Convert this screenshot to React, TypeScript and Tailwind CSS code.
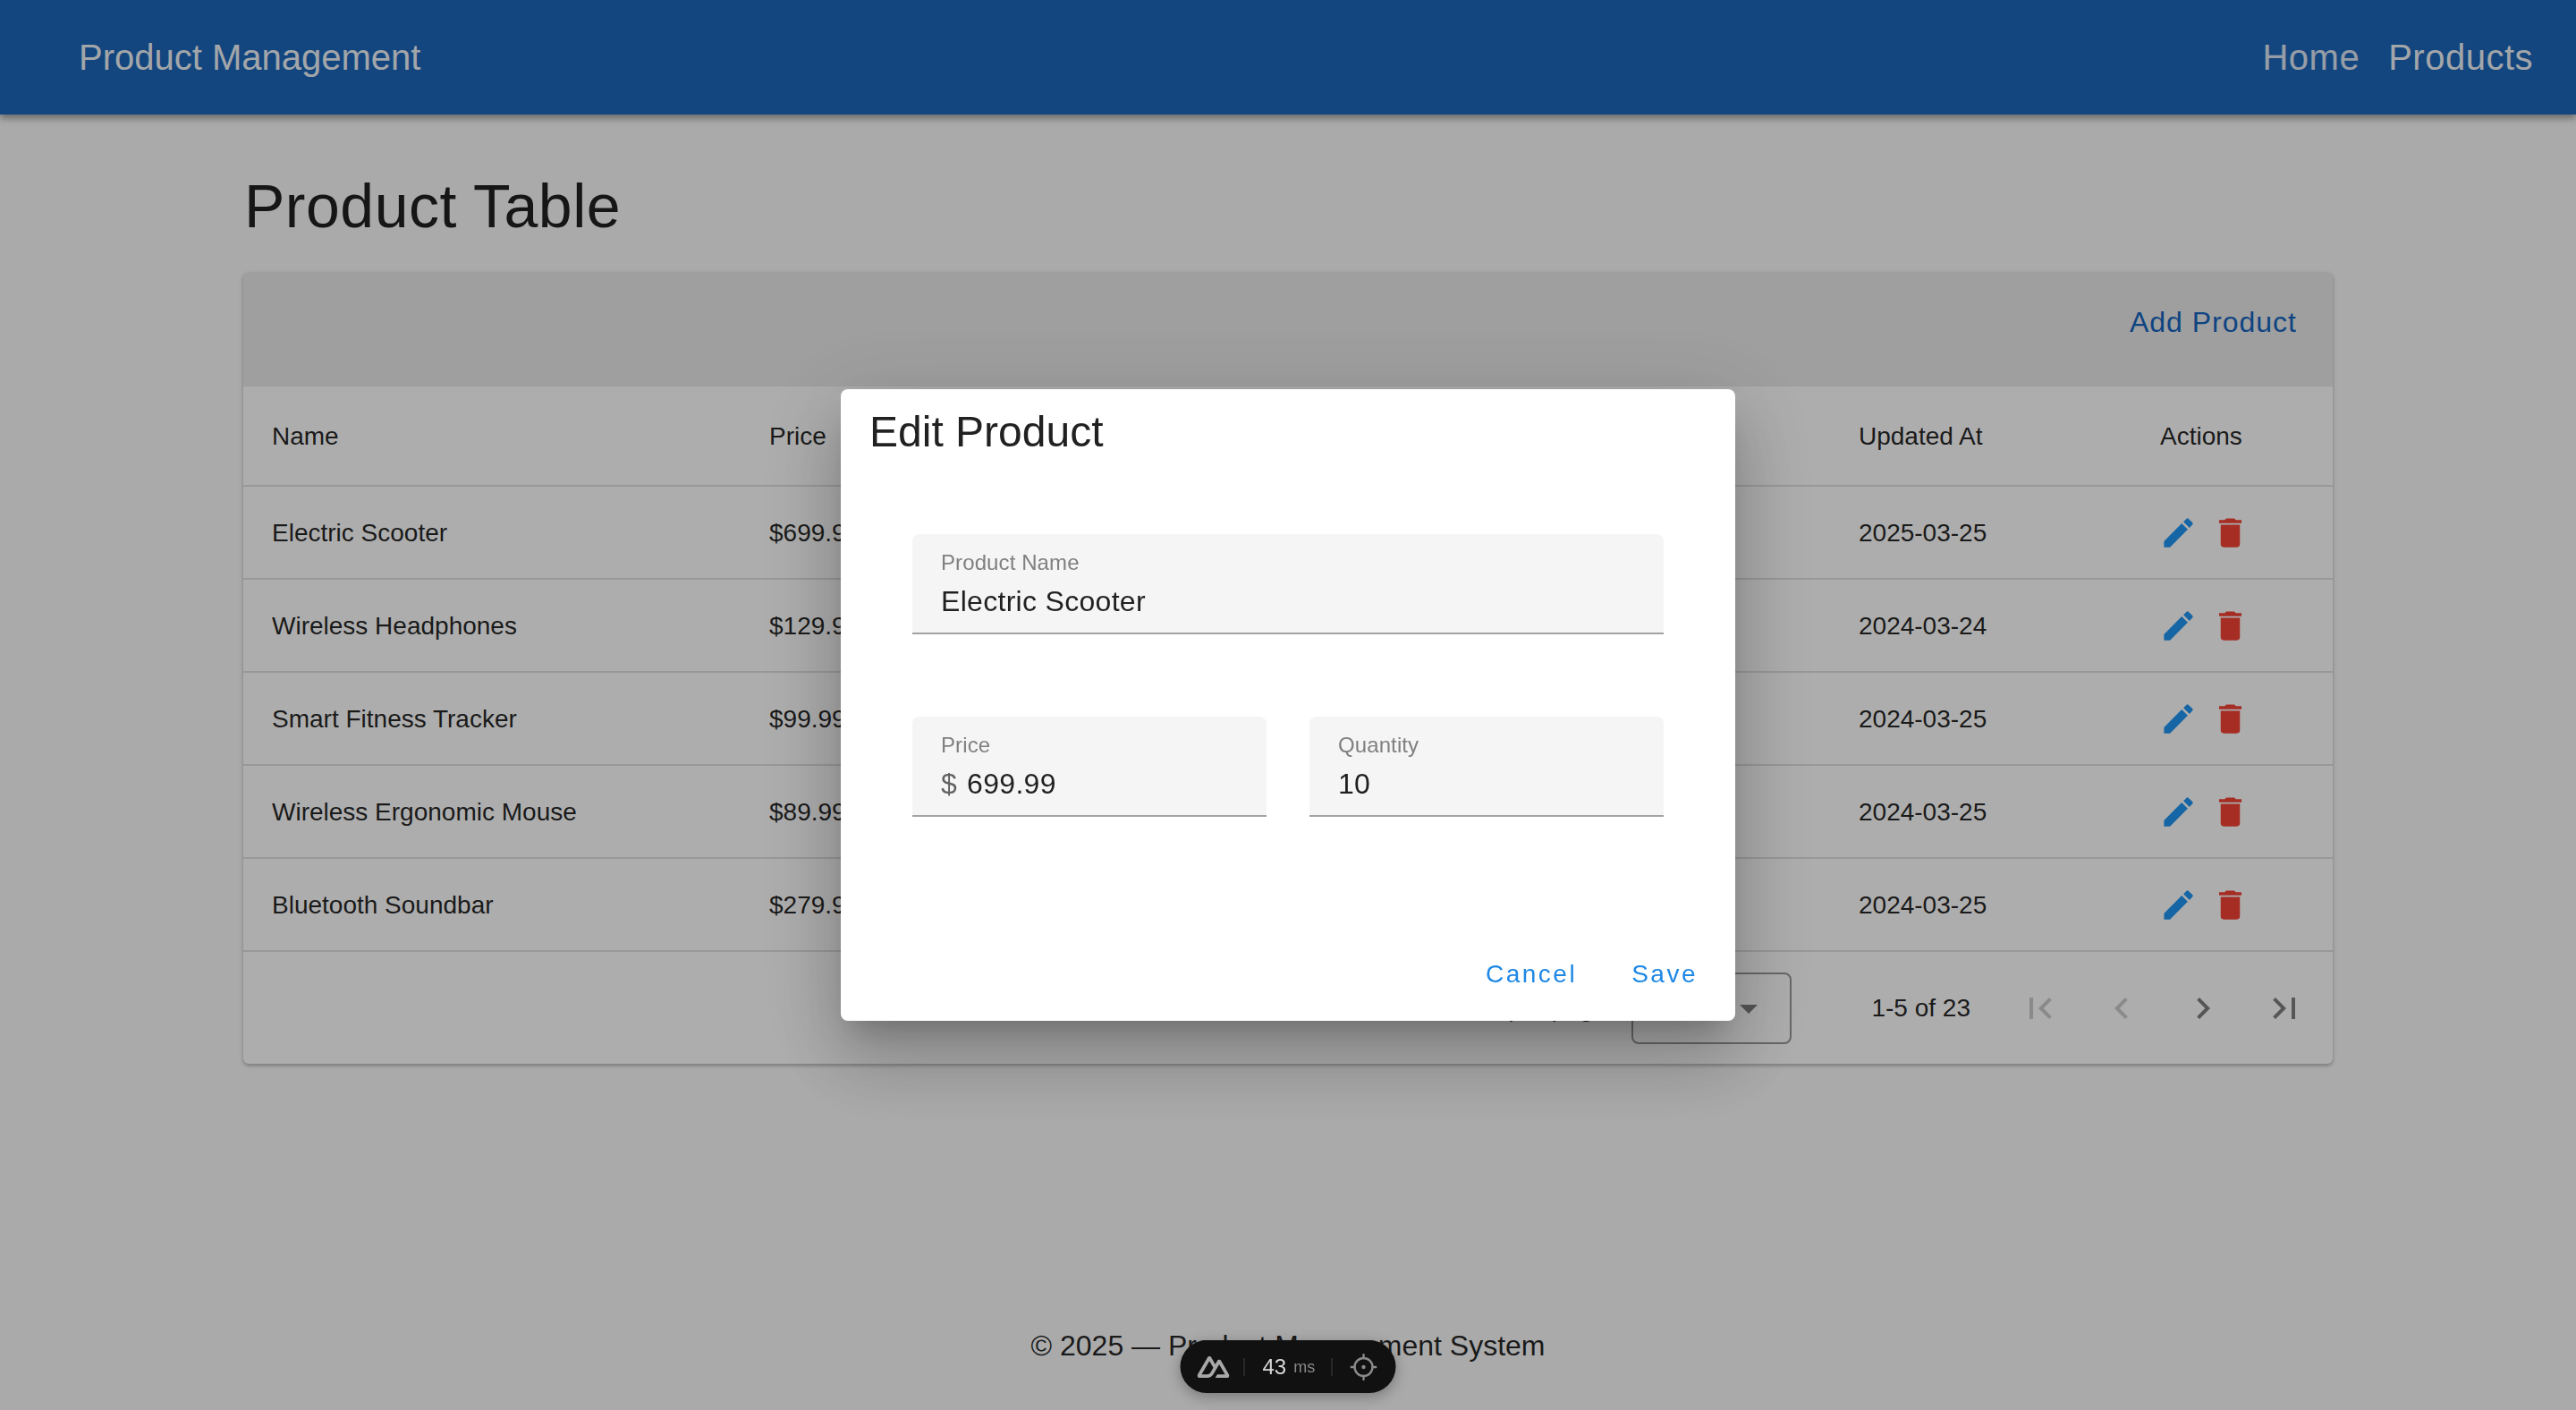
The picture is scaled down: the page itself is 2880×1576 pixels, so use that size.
import React from "react";

const PENCIL = "M20.71,7.04C21.1,6.65 21.1,6 20.71,5.63L18.37,3.29C18,2.9 17.35,2.9 16.96,3.29L15.12,5.12L18.87,8.87M3,17.25V21H6.75L17.81,9.93L14.06,6.18L3,17.25Z";
const TRASH = "M19,4H15.5L14.5,3H9.5L8.5,4H5V6H19M6,19A2,2 0 0,0 8,21H16A2,2 0 0,0 18,19V7H6V19Z";
const FIRST = "M18.41,16.59L13.82,12L18.41,7.41L17,6L11,12L17,18L18.41,16.59M6,6H8V18H6V6Z";
const PREV = "M15.41,16.58L10.83,12L15.41,7.41L14,6L8,12L14,18L15.41,16.58Z";
const NEXT = "M8.59,16.58L13.17,12L8.59,7.41L10,6L16,12L10,18L8.59,16.58Z";
const LAST = "M5.59,7.41L10.18,12L5.59,16.59L7,18L13,12L7,6L5.59,7.41M16,6H18V18H16V6Z";
const MENU = "M7,10L12,15L17,10H7Z";
const NUXT = "M181.767 270H302.211C306.037 270 309.795 268.996 313.108 267.088C316.421 265.18 319.172 262.436 321.084 259.133C322.996 255.829 324.002 252.082 324 248.267C323.998 244.453 322.989 240.706 321.074 237.404L240.187 98.1346C238.275 94.8322 235.525 92.0898 232.213 90.1832C228.901 88.2766 225.143 87.273 221.318 87.273C217.494 87.273 213.736 88.2766 210.424 90.1832C207.112 92.0898 204.361 94.8322 202.449 98.1346L181.767 133.782L141.329 64.0743C139.416 60.7722 136.664 58.0302 133.351 56.1241C130.038 54.2179 126.28 53.2145 122.454 53.2145C118.629 53.2145 114.871 54.2179 111.558 56.1241C108.245 58.0302 105.493 60.7722 103.58 64.0743L2.92554 237.404C1.01023 240.706 0.00179753 244.453 1.3538e-06 248.267C-0.00179484 252.082 1.0038 255.829 2.91568 259.133C4.82755 262.436 7.57882 265.18 10.8917 267.088C14.2046 268.996 17.9629 270 21.7887 270H97.3912C127.345 270 149.436 256.922 164.637 231.399L201.54 167.933L221.307 133.957L280.632 236.03H201.54L181.767 270ZM96.1612 236.03H43.4012L122.487 100.3L161.948 168.273L135.526 213.741C125.42 229.829 114.026 236.03 96.1612 236.03Z";

function Icon({ d, className }: { d: string; className: string }) {
  return (
    <svg viewBox="0 0 24 24" fill="currentColor" className={className}>
      <path d={d} />
    </svg>
  );
}

const rows = [
  { name: "Electric Scooter", price: "$699.99", updated: "2025-03-25" },
  { name: "Wireless Headphones", price: "$129.99", updated: "2024-03-24" },
  { name: "Smart Fitness Tracker", price: "$99.99", updated: "2024-03-25" },
  { name: "Wireless Ergonomic Mouse", price: "$89.99", updated: "2024-03-25" },
  { name: "Bluetooth Soundbar", price: "$279.99", updated: "2024-03-25" },
];

const gridCols = "grid grid-cols-[556px_1218px_337px_225px]";

function Field({ label, value, prefix, className }: { label: string; value: string; prefix?: string; className: string }) {
  return (
    <div className={`h-[112px] bg-[#f5f5f5] rounded-t-lg border-b-2 border-[#a3a3a3] pl-8 pt-[18px] ${className}`}>
      <div className="text-[24px] leading-[28px] tracking-[0.1px] text-[#808080]">{label}</div>
      <div className="mt-[7px] text-[32px] leading-[44px] tracking-[0.3px] text-black/87 flex">
        {prefix && <span className="text-black/60 mr-[11px]">{prefix}</span>}
        <span>{value}</span>
      </div>
    </div>
  );
}

export default function App() {
  return (
    <div className="min-h-screen flex flex-col bg-[#fbfbfb] font-['Liberation_Sans',Arial,sans-serif] text-black/87">
      <header className="h-32 flex items-center justify-between bg-[#1c67bc] text-white/95 pl-[88px] pr-[48px] shadow-[0_4px_8px_rgba(0,0,0,0.4)]">
        <div className="text-[40px] leading-none">Product Management</div>
        <nav className="flex gap-[32px] text-[40px] leading-none tracking-[0.5px]">
          <span className="text-white/85">Home</span>
          <span>Products</span>
        </nav>
      </header>

      <main className="px-[272px] pt-16">
        <h1 className="text-[68px] leading-[76px] tracking-[0.5px] mb-9 pl-px">Product Table</h1>
        <section className="bg-white rounded-md shadow-[0_2px_4px_rgba(0,0,0,0.3)] text-[28px]">
          <div className="h-32 bg-[#ebebeb] rounded-t-md flex justify-end pt-8 pr-10">
            <span className="text-[32px] leading-[48px] tracking-[1px] text-[#1565c0]">Add Product</span>
          </div>
          <div className={`${gridCols} h-[112px] items-center border-b-2 border-black/12`}>
            <div className="pl-8 pt-px">Name</div>
            <div className="pl-8 pt-px">Price</div>
            <div className="pl-8 pt-px">Updated At</div>
            <div className="pl-8 pt-px">Actions</div>
          </div>
          {rows.map((r) => (
            <div key={r.name} className={`${gridCols} h-[104px] items-center border-b-2 border-black/12`}>
              <div className="pl-8 pt-px">{r.name}</div>
              <div className="pl-8 pt-px">{r.price}</div>
              <div className="pl-8 pt-px">{r.updated}</div>
              <div className="pl-[31px] flex gap-[15px]">
                <Icon d={PENCIL} className="w-[43px] h-[43px] text-[#2196f3]" />
                <Icon d={TRASH} className="w-[43px] h-[43px] text-[#f44336]" />
              </div>
            </div>
          ))}
          <div className="h-[125px] flex items-center justify-end pr-[9px]">
            <span className="pt-px">Items per page:</span>
            <div className="ml-[20px] w-[179px] h-20 border-2 border-black/40 rounded-lg flex items-center justify-between pl-8 pr-[22px]">
              <span className="text-[32px]">5</span>
              <Icon d={MENU} className="w-12 h-12 text-black/50" />
            </div>
            <span className="ml-[89px] mr-[32px] pt-px">1-5 of 23</span>
            <div className="w-[91px] flex justify-center"><Icon d={FIRST} className="w-12 h-12 text-black/20" /></div>
            <div className="w-[91px] flex justify-center"><Icon d={PREV} className="w-12 h-12 text-black/20" /></div>
            <div className="w-[91px] flex justify-center"><Icon d={NEXT} className="w-12 h-12 text-black/50" /></div>
            <div className="w-[91px] flex justify-center"><Icon d={LAST} className="w-12 h-12 text-black/50" /></div>
          </div>
        </section>
      </main>

      <footer className="mt-auto pb-12 text-center text-[32px] leading-[48px]">© 2025 — Product Management System</footer>

      <div className="fixed inset-0 bg-black/32 flex items-center justify-center">
        <div className="w-[1000px] h-[706px] bg-white rounded-lg flex flex-col shadow-[0_22px_30px_-14px_rgba(0,0,0,0.2),0_48px_76px_6px_rgba(0,0,0,0.14),0_18px_92px_16px_rgba(0,0,0,0.12)]">
          <h2 className="text-[48px] leading-16 pl-8 pt-4">Edit Product</h2>
          <div className="px-20 pt-[82px] flex flex-col gap-[92px]">
            <Field label="Product Name" value="Electric Scooter" className="w-full" />
            <div className="flex gap-12">
              <Field label="Price" value="699.99" prefix="$" className="flex-1" />
              <Field label="Quantity" value="10" className="flex-1" />
            </div>
          </div>
          <div className="mt-auto flex justify-end gap-[29px] pr-[26px] pb-4 text-[#1e88e5] text-[28px] tracking-[2.5px]">
            <span className="h-[72px] px-4 flex items-center">Cancel</span>
            <span className="h-[72px] px-4 flex items-center">Save</span>
          </div>
        </div>
      </div>

      <div className="fixed left-1/2 -translate-x-1/2 bottom-[19px] w-[241px] h-[59px] rounded-full bg-[#111111] flex items-center pl-[19px] shadow-[0_4px_16px_rgba(0,0,0,0.3)]">
        <svg viewBox="0 53 324 217" fill="#a8a8a8" className="w-9 h-6 shrink-0">
          <path d={NUXT} />
        </svg>
        <div className="w-px h-5 bg-white/20 ml-4" />
        <span className="ml-5 text-[24px] leading-none text-[#d8d8d8]">43</span>
        <span className="ml-2 text-[18px] leading-none text-[#888888]">ms</span>
        <div className="w-px h-5 bg-white/20 ml-[18px]" />
        <svg viewBox="0 0 30 30" fill="none" stroke="#8a8a8a" strokeWidth="2.4" className="w-[30px] h-[30px] ml-5 shrink-0">
          <circle cx="15" cy="15" r="10" />
          <path d="M15 1v4M15 25v4M1 15h4M25 15h4" strokeLinecap="round" />
          <circle cx="15" cy="15" r="2.2" fill="#8a8a8a" stroke="none" />
        </svg>
      </div>
    </div>
  );
}
